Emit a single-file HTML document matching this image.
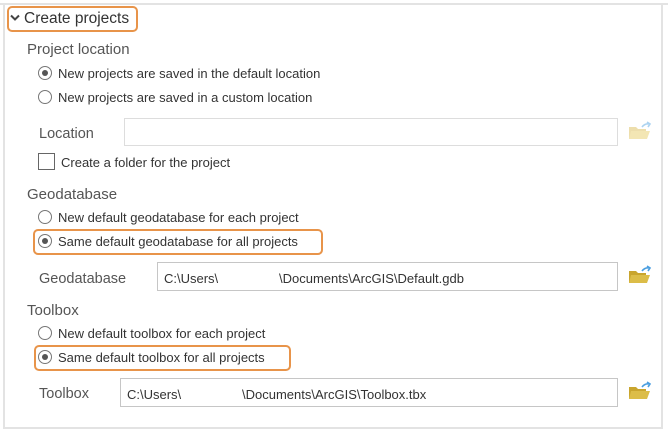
<!DOCTYPE html>
<html><head><meta charset="utf-8"><style>
*{margin:0;padding:0;box-sizing:border-box}
body{width:668px;height:432px;background:#fff;font-family:"Liberation Sans",sans-serif;color:#333;position:relative;overflow:hidden}
.a{position:absolute;white-space:nowrap}
.frame{position:absolute;left:3px;top:3px;width:660px;height:426px;border:2px solid #e3e3e3;border-top:none}
.hl{position:absolute;border:2px solid #e8944a;border-radius:5px}
.h{font-size:15px;color:#555}
.t{font-size:13px;color:#333}
.lb{font-size:14.5px;color:#555}
.rad{position:absolute;width:14px;height:14px;border:1px solid #777;border-radius:50%;background:#fff}
.rad.on::after{content:"";position:absolute;left:3px;top:3px;width:6px;height:6px;border-radius:50%;background:#555}
.inp{position:absolute;border:1px solid #c6c6c6;background:#fff;font-size:13px;color:#333}
.inp span{position:absolute;top:8px}
</style></head><body>
<div class="frame"></div>
<div class="a" style="left:0;top:3px;width:668px;border-top:2px solid #e3e3e3"></div>
<div class="hl" style="left:7px;top:6px;width:131px;height:26px"></div>
<svg class="a" style="left:10px;top:14px" width="10" height="8"><path d="M1 1.5 L5 5.5 L9 1.5" stroke="#444" stroke-width="2" fill="none"/></svg>
<div class="a" style="left:24px;top:10px;font-size:15.5px;color:#333">Create projects</div>
<div class="a h" style="left:27px;top:41px">Project location</div>
<div class="rad on" style="left:38px;top:66px"></div><div class="a t" style="left:58px;top:66px">New projects are saved in the default location</div>
<div class="rad" style="left:38px;top:90px"></div><div class="a t" style="left:58px;top:90px">New projects are saved in a custom location</div>
<div class="a lb" style="left:39px;top:126px">Location</div>
<div class="inp" style="left:124px;top:118px;width:494px;height:28px;border-color:#ddd"></div>
<svg class="a" style="left:628px;top:121px;opacity:.45" width="24" height="20"><path d="M1 6h7l2 2h8v10H1z" fill="#d8b84a"/><path d="M3 10h19l-3 8H1z" fill="#e6c95a"/><path d="M14 6 q3-4 8-3 M19 1 l3 2 -2 3" stroke="#4a9ee0" stroke-width="1.6" fill="none"/></svg>
<div class="a" style="left:38px;top:153px;width:17px;height:17px;border:1px solid #666;background:#fff"></div>
<div class="a t" style="left:61px;top:155px">Create a folder for the project</div>
<div class="a h" style="left:27px;top:186px">Geodatabase</div>
<div class="rad" style="left:38px;top:210px"></div><div class="a t" style="left:58px;top:210px">New default geodatabase for each project</div>
<div class="hl" style="left:33px;top:229px;width:290px;height:26px"></div>
<div class="rad on" style="left:38px;top:234px"></div><div class="a t" style="left:58px;top:234px">Same default geodatabase for all projects</div>
<div class="a lb" style="left:39px;top:271px">Geodatabase</div>
<div class="inp" style="left:157px;top:262px;width:461px;height:29px"><span style="left:6px">C:\Users\</span><span style="left:121px">\Documents\ArcGIS\Default.gdb</span></div>
<svg class="a" style="left:628px;top:265px" width="24" height="20"><path d="M1 6h7l2 2h8v10H1z" fill="#c9a52e"/><path d="M3 10h19l-3 8H1z" fill="#dcbd48"/><path d="M14 6 q3-4 8-3 M19 1 l3 2 -2 3" stroke="#4a9ee0" stroke-width="1.6" fill="none"/></svg>
<div class="a h" style="left:27px;top:302px">Toolbox</div>
<div class="rad" style="left:38px;top:326px"></div><div class="a t" style="left:58px;top:326px">New default toolbox for each project</div>
<div class="hl" style="left:34px;top:345px;width:257px;height:26px"></div>
<div class="rad on" style="left:38px;top:350px"></div><div class="a t" style="left:58px;top:350px">Same default toolbox for all projects</div>
<div class="a lb" style="left:39px;top:386px">Toolbox</div>
<div class="inp" style="left:120px;top:378px;width:498px;height:29px"><span style="left:6px">C:\Users\</span><span style="left:121px">\Documents\ArcGIS\Toolbox.tbx</span></div>
<svg class="a" style="left:628px;top:381px" width="24" height="20"><path d="M1 6h7l2 2h8v10H1z" fill="#c9a52e"/><path d="M3 10h19l-3 8H1z" fill="#dcbd48"/><path d="M14 6 q3-4 8-3 M19 1 l3 2 -2 3" stroke="#4a9ee0" stroke-width="1.6" fill="none"/></svg>
</body></html>
